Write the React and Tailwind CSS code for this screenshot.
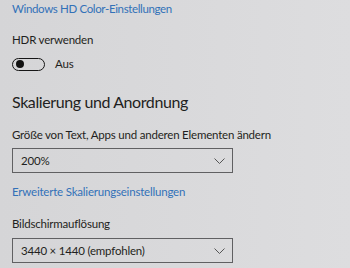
function Chevron() {
  return (
    <svg width="11" height="6" viewBox="0 0 11 6" fill="none" stroke="#555" strokeWidth="1">
      <path d="M0.5 0.5 L5.5 5.5 L10.5 0.5" />
    </svg>
  )
}

function Select({ value }) {
  return (
    <div className="w-[221px] h-[25px] border-[1.5px] border-[#606062] flex items-center justify-between pl-[8px] pr-[7px]">
      <span className="text-[11.5px] tracking-[-0.2px]">{value}</span>
      <Chevron />
    </div>
  )
}

export default function App() {
  return (
    <div className="w-[350px] h-[268px] overflow-hidden bg-gradient-to-r from-[#d5d5d7] to-[#dddddf] text-[#1f1f21] pl-3 font-[Lato,sans-serif] text-[11.5px] leading-[16px] tracking-[-0.2px]">
      <div className="pt-[1px] text-[#3271b8] tracking-[-0.35px]">Windows HD Color-Einstellungen</div>

      <div className="mt-[15px]">HDR verwenden</div>
      <div className="mt-[8px] flex items-center">
        <div className="w-[33px] h-[13px] rounded-full border-[1.5px] border-[#161616] flex items-center pl-[3px]">
          <div className="w-[8px] h-[8px] rounded-full bg-[#111]" />
        </div>
        <span className="ml-[10px]">Aus</span>
      </div>

      <div className="mt-[18px] text-[16px] leading-[24px] tracking-[-0.4px]">Skalierung und Anordnung</div>

      <div className="mt-[13px]">Größe von Text, Apps und anderen Elementen ändern</div>
      <div className="mt-[5px]">
        <Select value="200%" />
      </div>

      <div className="mt-[11px] text-[#3271b8]">Erweiterte Skalierungseinstellungen</div>

      <div className="mt-[16px]">Bildschirmauflösung</div>
      <div className="mt-[6px]">
        <Select value="3440 × 1440 (empfohlen)" />
      </div>
    </div>
  )
}
